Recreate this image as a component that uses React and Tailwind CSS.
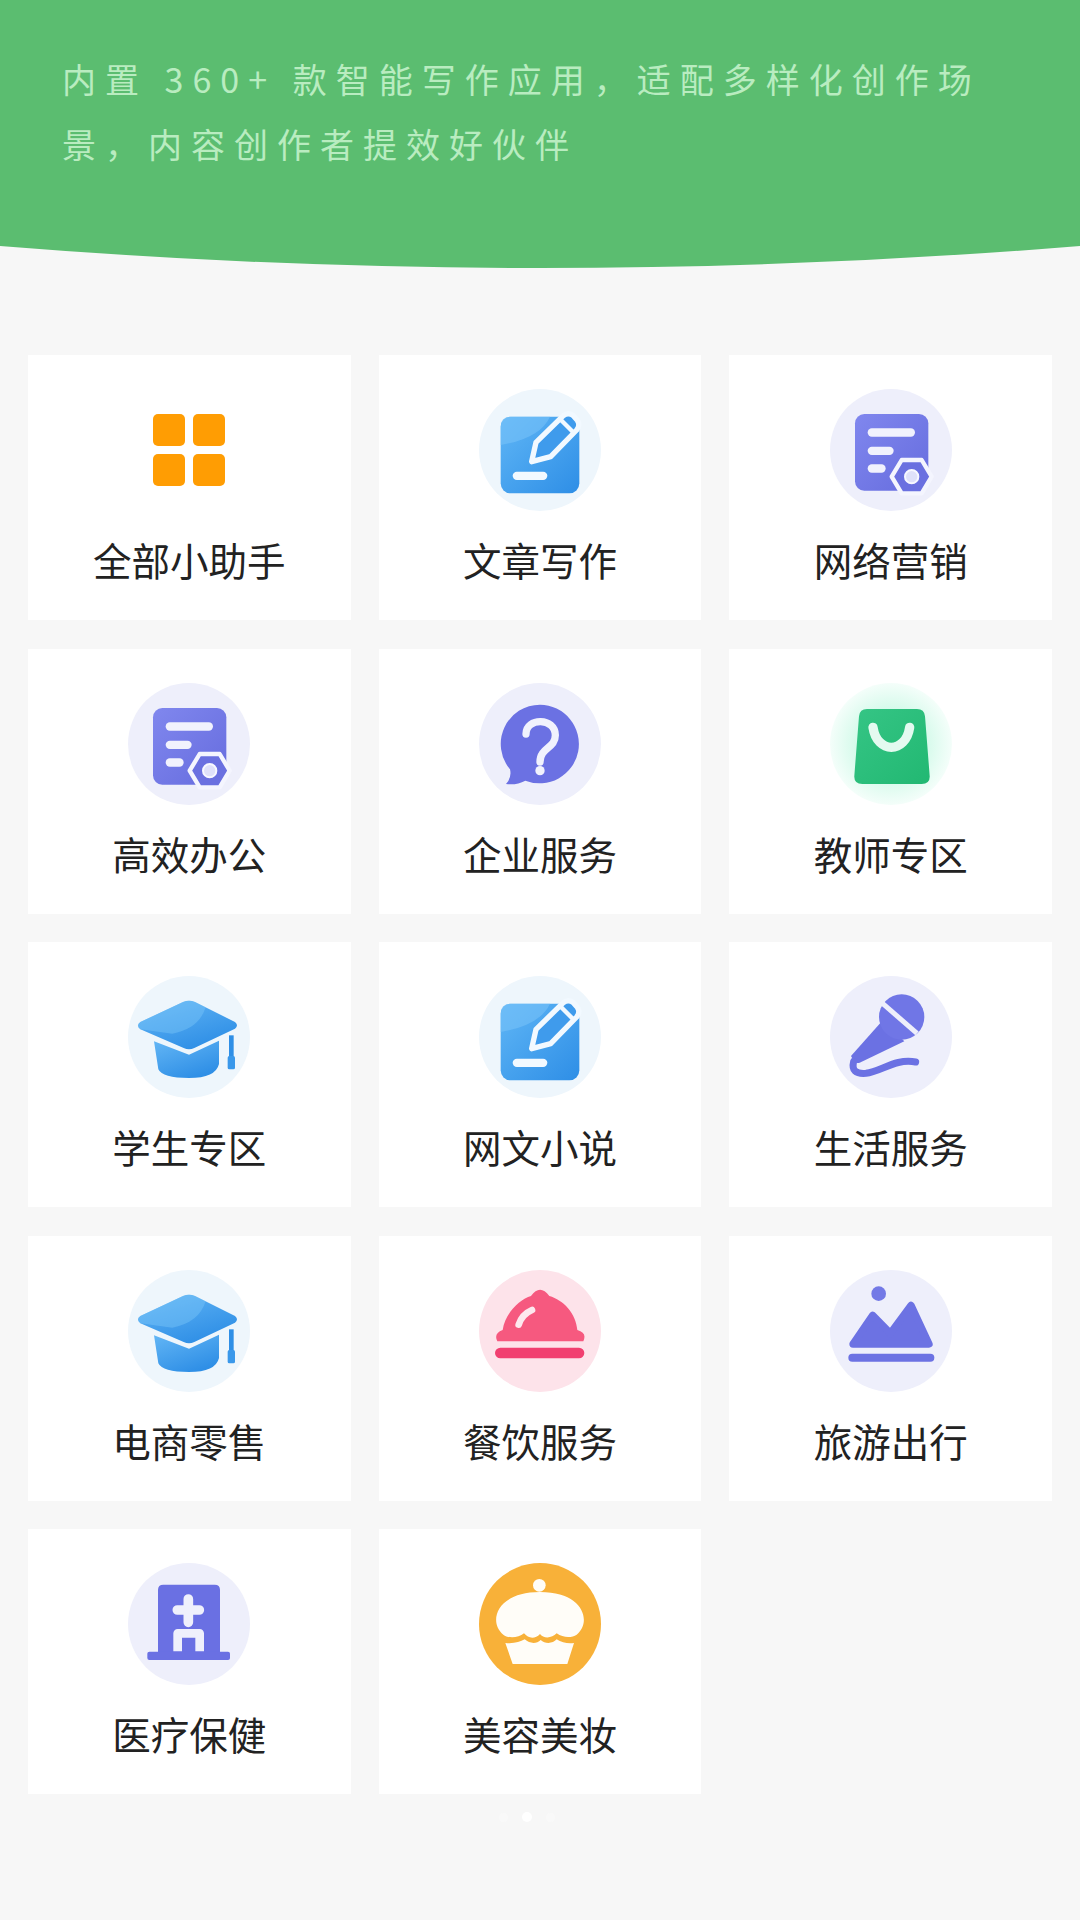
const cjk = { fontFamily: '"Noto Sans CJK SC", "Noto Sans", sans-serif' }

function Grad({ id, from, to, x2 = 1, y2 = 1 }) {
  return (
    <linearGradient id={id} x1="0" y1="0" x2={x2} y2={y2}>
      <stop offset="0" stopColor={from} />
      <stop offset="1" stopColor={to} />
    </linearGradient>
  )
}

function Disc({ cy, children, fill = '#eeeffb' }) {
  return (
    <svg width="122" height="122" viewBox={`57 ${cy - 183} 366 366`} className="block">
      <circle cx="240" cy={cy} r="183" fill={fill} />
      {children}
    </svg>
  )
}

function GridIcon() {
  return (
    <div className="w-[122px] h-[122px] flex items-center justify-center">
      <div className="grid grid-cols-2 gap-[8px]">
        <div className="w-[32px] h-[32px] rounded-[5px] bg-[#ff9d03]" />
        <div className="w-[32px] h-[32px] rounded-[5px] bg-[#ff9d03]" />
        <div className="w-[32px] h-[32px] rounded-[5px] bg-[#ff9d03]" />
        <div className="w-[32px] h-[32px] rounded-[5px] bg-[#ff9d03]" />
      </div>
    </div>
  )
}

function PenIcon({ id }) {
  return (
    <Disc cy={205} fill="#eef6fc">
      <defs><Grad id={id} from="#5fb6f6" to="#2e8ee6" /></defs>
      <rect x="122" y="105" width="236" height="230" rx="30" fill={`url(#${id})`} />
      <path d="M122 190 V135 Q122 105 152 105 H270 Q240 170 122 190 Z" fill="#77c2f8" opacity="0.6" />
      <path d="M215 240 L228 182 L310 102 Q325 90 340 102 L352 116 Q362 130 350 145 L272 225 Z" fill="#3f9bec" stroke="#f2f9ff" strokeWidth="16" strokeLinejoin="round" />
      <path d="M300 112 L342 154" stroke="#f2f9ff" strokeWidth="13" />
      <rect x="158" y="270" width="104" height="25" rx="12.5" fill="#f2f9ff" />
    </Disc>
  )
}

function DocIcon({ id }) {
  return (
    <Disc cy={205}>
      <defs><Grad id={id} from="#8087ee" to="#666cde" /></defs>
      <rect x="132" y="97" width="220" height="230" rx="28" fill={`url(#${id})`} />
      <rect x="170" y="140" width="142" height="25" rx="12.5" fill="#f1f2fd" />
      <rect x="170" y="195" width="78" height="25" rx="12.5" fill="#f1f2fd" />
      <rect x="170" y="248" width="54" height="25" rx="12.5" fill="#f1f2fd" />
      <path d="M272 235 H332 L362 285 L332 335 H272 L242 285 Z" fill="#6a70e0" stroke="#f4f5fe" strokeWidth="13" strokeLinejoin="round" />
      <circle cx="302" cy="285" r="20" fill="#dfe1fa" stroke="#f7f8ff" strokeWidth="6" />
    </Disc>
  )
}

function QuestionIcon() {
  return (
    <Disc cy={222}>
      <path d="M240 104 A118 118 0 1 1 196 332 Q170 346 138 342 Q156 322 150 298 A118 118 0 0 1 240 104 Z" fill="#6b71e3" />
      <path d="M198 192 C198 142 286 142 286 196 C286 236 240 232 240 276" fill="none" stroke="#f1f2fd" strokeWidth="22" strokeLinecap="round" />
      <circle cx="240" cy="302" r="14" fill="#f1f2fd" />
    </Disc>
  )
}

function BagIcon() {
  return (
    <svg width="122" height="122" viewBox="57 32 366 366" className="block">
      <defs>
        <radialGradient id="bagGlow">
          <stop offset="0.55" stopColor="#d4faea" />
          <stop offset="1" stopColor="#f4fefa" />
        </radialGradient>
        <Grad id="bagFill" from="#35c585" to="#22b872" />
      </defs>
      <circle cx="240" cy="215" r="183" fill="url(#bagGlow)" />
      <path d="M168 110 H318 Q340 110 342 132 L356 310 Q358 335 332 335 H154 Q128 335 130 310 L144 132 Q146 110 168 110 Z" fill="url(#bagFill)" />
      <path d="M186 165 C198 245 284 245 296 165" fill="none" stroke="#e4faf0" strokeWidth="28" strokeLinecap="round" />
    </svg>
  )
}

function CapIcon({ id }) {
  return (
    <Disc cy={215} fill="#eef6fc">
      <defs><Grad id={id} from="#63b6f5" to="#2f8fe6" x2={0.6} /></defs>
      <path d="M135 228 L240 268 L330 226 V296 Q320 338 240 338 Q160 338 148 312 Z" fill={`url(#${id})`} />
      <path d="M94 170 L222 110 Q240 102 258 110 L378 170 Q390 180 378 190 L256 248 Q240 256 224 248 L94 192 Q80 180 94 170 Z" fill={`url(#${id})`} />
      <path d="M94 170 L222 110 Q240 102 258 110 L290 126 Q270 190 190 205 L94 192 Q80 180 94 170 Z" fill="#7ac5f8" opacity="0.45" />
      <rect x="360" y="210" width="14" height="70" fill="#2f8fe6" />
      <rect x="356" y="272" width="22" height="40" rx="5" fill="#3a98ea" />
    </Disc>
  )
}

function MicIcon() {
  return (
    <Disc cy={215}>
      <path d="M214 166 L280 228 L146 292 Q134 296 128 286 L120 272 Z" fill="#6b71e3" strokeLinejoin="round" />
      <circle cx="272" cy="155" r="68" fill="#7076e6" />
      <path d="M212 112 L318 204" stroke="#eeeffb" strokeWidth="15" />
      <path d="M128 288 Q118 328 165 324 C210 318 255 278 314 290" fill="none" stroke="#6b71e3" strokeWidth="21" strokeLinecap="round" />
    </Disc>
  )
}

function ClocheIcon() {
  return (
    <Disc cy={215} fill="#fde3ea">
      <path d="M112 246 Q100 222 128 212 C136 160 180 120 213 110 Q240 72 268 110 C310 122 348 162 352 212 Q382 220 370 246 Z" fill="#f6597f" />
      <path d="M176 196 Q186 165 216 152" fill="none" stroke="#fde8ee" strokeWidth="20" strokeLinecap="round" />
      <rect x="105" y="265" width="268" height="32" rx="16" fill="#f13f70" />
    </Disc>
  )
}

function MountainIcon() {
  return (
    <Disc cy={215}>
      <circle cx="203" cy="103" r="22" fill="#7379e6" />
      <path d="M126 254 L185 168 L238 222 L300 138 L354 254 Z" fill="#6c72e3" stroke="#6c72e3" strokeWidth="22" strokeLinejoin="round" />
      <rect x="112" y="283" width="258" height="24" rx="12" fill="#6c72e3" />
    </Disc>
  )
}

function HospitalIcon() {
  return (
    <Disc cy={210}>
      <path d="M147 300 V108 Q147 92 163 92 H317 Q333 92 333 108 V300 Z" fill="#6a70e3" />
      <rect x="115" y="293" width="248" height="25" rx="6" fill="#6a70e3" />
      <path d="M238 135 V205 M205 168 H271" stroke="#eff0fc" strokeWidth="29" strokeLinecap="round" />
      <path d="M206 292 V238 H272 V292" fill="none" stroke="#eff0fc" strokeWidth="26" strokeLinejoin="round" />
    </Disc>
  )
}

function CupcakeIcon() {
  return (
    <Disc cy={208} fill="#f8b139">
      <circle cx="238" cy="92" r="19" fill="#fffdf8" />
      <path d="M130 240 C85 205 105 112 240 112 C375 112 395 205 350 240 C335 250 310 250 290 236 C275 252 250 252 240 238 C225 254 205 252 192 236 C175 250 145 252 130 240 Z" fill="#fffdf8" />
      <path d="M136 265 C160 268 180 262 194 254 C210 268 230 268 242 256 C255 268 278 268 290 254 C305 264 325 268 342 265 L322 328 H158 Z" fill="#fffdf8" />
    </Disc>
  )
}

const ITEMS = [
  { label: '全部小助手', icon: <GridIcon /> },
  { label: '文章写作', icon: <PenIcon id="pen1" /> },
  { label: '网络营销', icon: <DocIcon id="doc1" /> },
  { label: '高效办公', icon: <DocIcon id="doc2" /> },
  { label: '企业服务', icon: <QuestionIcon /> },
  { label: '教师专区', icon: <BagIcon /> },
  { label: '学生专区', icon: <CapIcon id="cap1" /> },
  { label: '网文小说', icon: <PenIcon id="pen2" /> },
  { label: '生活服务', icon: <MicIcon /> },
  { label: '电商零售', icon: <CapIcon id="cap2" /> },
  { label: '餐饮服务', icon: <ClocheIcon /> },
  { label: '旅游出行', icon: <MountainIcon /> },
  { label: '医疗保健', icon: <HospitalIcon /> },
  { label: '美容美妆', icon: <CupcakeIcon /> },
]

export default function App() {
  return (
    <div className="w-[1080px] h-[1920px] overflow-hidden bg-[#f7f7f7]" style={cjk}>
      <div className="h-[246px] bg-[#5bbd70] px-[62px] pt-[46px]">
        <p className="text-[34px] leading-[65px] tracking-[9px] text-[#b9ecc0]">
          内置 360+ 款智能写作应用，适配多样化创作场景，内容创作者提效好伙伴
        </p>
      </div>
      <svg width="1080" height="22" viewBox="0 0 1080 22" className="block">
        <path d="M0 0 H1080 Q540 44 0 0 Z" fill="#5bbd70" />
      </svg>

      <div className="grid grid-cols-3 gap-x-[28px] gap-y-[28.5px] px-[28px] pt-[87px]">
        {ITEMS.map(item => (
          <div key={item.label} className="h-[265px] bg-white flex flex-col items-center pt-[34px]">
            {item.icon}
            <div className="mt-[21px] text-[38.5px] leading-[54px] text-[#222222]">{item.label}</div>
          </div>
        ))}
      </div>

      <div className="flex justify-center items-center gap-[14px] mt-[18px] pr-[26px]">
        <div className="w-[9px] h-[9px] rounded-full bg-[#f9f9f9]" />
        <div className="w-[10px] h-[10px] rounded-full bg-white" />
        <div className="w-[9px] h-[9px] rounded-full bg-[#f9f9f9]" />
      </div>
    </div>
  )
}
